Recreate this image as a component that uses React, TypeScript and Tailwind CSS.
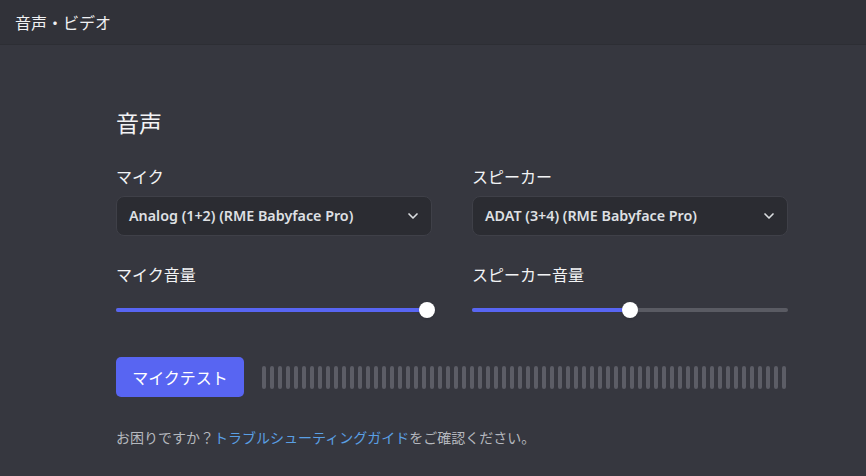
import { ChevronDown } from "lucide-react";

const jp = "font-['Noto_Sans_CJK_JP','Noto_Sans',sans-serif]";

function Select({ value }: { value: string }) {
  return (
    <div className="flex h-[40px] w-[316px] items-center justify-between rounded-[8px] border border-[#3f4048] bg-[#2b2c32] pl-[12px] pr-[10px]">
      <span className="font-['Noto_Sans',sans-serif] text-[14.3px] font-semibold text-[#dfe0e4]">{value}</span>
      <ChevronDown className="size-[16px] text-[#dbdee1]" strokeWidth={2.5} />
    </div>
  );
}

// knob center: 158px at 50%, 311px at 100%
function Slider({ knob }: { knob: number }) {
  return (
    <div className="relative h-[18px] w-[316px]">
      <div className="absolute left-0 right-0 top-[7px] h-[4px] rounded-full bg-[#5a5b63]" />
      <div className="absolute left-0 top-[7px] h-[4px] rounded-full bg-[#5865f2]" style={{ width: `${knob}px` }} />
      <div className="absolute top-[1px] size-[16px] rounded-full bg-white shadow" style={{ left: `${knob - 8}px` }} />
    </div>
  );
}

export default function App() {
  const bars = Array.from({ length: 66 });
  return (
    <div className={`h-[476px] w-[866px] overflow-hidden bg-[#36373f] ${jp}`}>
      <div className="flex h-[45px] items-center border-b border-[#2d2e34] bg-[#313239] px-[15px]">
        <span className="text-[16px] text-[#f0f1f3]">音声・ビデオ</span>
      </div>

      <div className="w-[672px] pl-[116px] pt-[62px] box-content">
        <h2 className="text-[23px] leading-[30px] text-[#f2f3f5]">音声</h2>

        <div className="mt-[27px] grid grid-cols-[316px_316px] gap-x-[40px]">
          <div>
            <div className="mb-[8px] text-[16px] leading-[24px] text-[#f2f3f5]">マイク</div>
            <Select value="Analog (1+2) (RME Babyface Pro)" />
          </div>
          <div>
            <div className="mb-[8px] text-[16px] leading-[24px] text-[#f2f3f5]">スピーカー</div>
            <Select value="ADAT (3+4) (RME Babyface Pro)" />
          </div>

          <div className="mt-[26px]">
            <div className="mb-[15px] text-[16px] leading-[24px] text-[#f2f3f5]">マイク音量</div>
            <Slider knob={311} />
          </div>
          <div className="mt-[26px]">
            <div className="mb-[15px] text-[16px] leading-[24px] text-[#f2f3f5]">スピーカー音量</div>
            <Slider knob={158} />
          </div>
        </div>

        <div className="mt-[38px] flex items-center gap-[18px]">
          <button className="h-[40px] w-[128px] rounded-[5px] bg-[#5865f2] text-[16px] text-white">マイクテスト</button>
          <div className="flex h-[24px] items-center gap-[4px]">
            {bars.map((_, i) => (
              <div key={i} className="h-[23px] w-[4px] rounded-[2px] bg-[#5c5d66]" />
            ))}
          </div>
        </div>

        <p className="mt-[30px] text-[14px] text-[#b5b8be]">
          お困りですか？<span className="text-[#5a9fe4]">トラブルシューティングガイド</span>をご確認ください。
        </p>
      </div>
    </div>
  );
}
